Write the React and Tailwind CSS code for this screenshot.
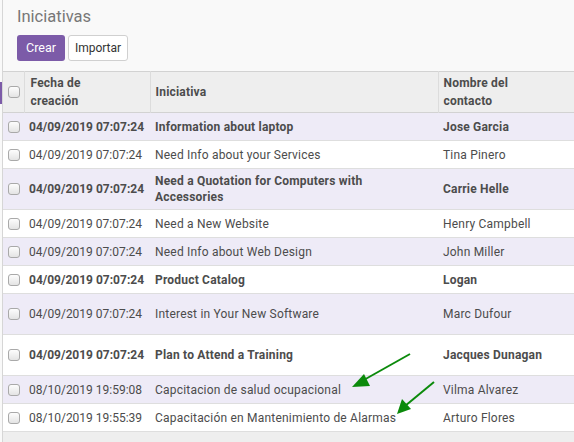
import React from "react";

const rows = [
  { date: "04/09/2019 07:07:24", name: "Information about laptop", contact: "Jose Garcia", bold: true, h: "h-[28px]" },
  { date: "04/09/2019 07:07:24", name: "Need Info about your Services", contact: "Tina Pinero", bold: false, h: "h-[28px]" },
  { date: "04/09/2019 07:07:24", name: "Need a Quotation for Computers with Accessories", contact: "Carrie Helle", bold: true, h: "h-[41px]" },
  { date: "04/09/2019 07:07:24", name: "Need a New Website", contact: "Henry Campbell", bold: false, h: "h-[28px]" },
  { date: "04/09/2019 07:07:24", name: "Need Info about Web Design", contact: "John Miller", bold: false, h: "h-[28px]" },
  { date: "04/09/2019 07:07:24", name: "Product Catalog", contact: "Logan", bold: true, h: "h-[28px]" },
  { date: "04/09/2019 07:07:24", name: "Interest in Your New Software", contact: "Marc Dufour", bold: false, h: "h-[41px]" },
  { date: "04/09/2019 07:07:24", name: "Plan to Attend a Training", contact: "Jacques Dunagan", bold: true, h: "h-[41px]" },
  { date: "08/10/2019 19:59:08", name: "Capcitacion de salud ocupacional", contact: "Vilma Alvarez", bold: false, h: "h-[28px]" },
  { date: "08/10/2019 19:55:39", name: "Capacitación en Mantenimiento de Alarmas", contact: "Arturo Flores", bold: false, h: "h-[28px]" },
];

function Check() {
  return (
    <span className="block w-[12px] h-[12px] rounded-[3px] border border-[#a9a9a9] bg-gradient-to-b from-[#fdfdfd] to-[#e4e4e4]" />
  );
}

export default function App() {
  return (
    <div className="relative w-[574px] h-[442px] overflow-hidden bg-[#f9f9f9] font-['Roboto',sans-serif] text-[12px] text-[#4c4c4c]">
      <div className="absolute left-0 top-[82px] w-[2px] h-[22px] bg-[#7c5ba8]" />
      <div className="ml-[2px] h-full border-l border-[#d6d6d6] flex flex-col">
        <div className="pl-[14px] pt-[6px] h-[71px]">
          <div className="text-[16.5px] text-[#777] leading-[21px]">Iniciativas</div>
          <div className="flex gap-[3px] mt-[8px]">
            <button className="w-[48px] h-[26px] rounded-[3px] bg-[#7c5ba8] text-white text-[12.5px]">Crear</button>
            <button className="w-[60px] h-[26px] rounded-[3px] bg-white border border-[#d0d0d0] text-[#333] text-[12px]">Importar</button>
          </div>
        </div>
        <table className="w-full border-collapse table-fixed">
          <colgroup>
            <col className="w-[21px]" />
            <col className="w-[126px]" />
            <col className="w-[288px]" />
            <col />
          </colgroup>
          <thead>
            <tr className="h-[41px] bg-[#eeeeee] border-t border-b border-[#d2d2d2] font-bold leading-[18px] tracking-[0.2px]">
              <th className="pl-[5px] align-middle"><Check /></th>
              <th className="text-left font-bold px-[6px] border-l border-[#dcdcdc]">Fecha de<br />creación</th>
              <th className="text-left font-bold px-[5px] border-l border-[#dcdcdc]">Iniciativa</th>
              <th className="text-left font-bold px-[5px] border-l border-[#dcdcdc]">Nombre del<br />contacto</th>
            </tr>
          </thead>
          <tbody>
            {rows.map((r, i) => (
              <tr
                key={i}
                className={`${r.h} border-b border-[#dedede] leading-[16px] ${i % 2 === 0 ? "bg-[#eeebf7]" : "bg-white"} ${r.bold ? "font-bold" : ""}`}
              >
                <td className="pl-[5px] align-middle"><Check /></td>
                <td className="px-[5px] whitespace-nowrap">{r.date}</td>
                <td className="px-[5px] tracking-[0.2px]">{r.name}</td>
                <td className="px-[5px] tracking-[0.2px]">{r.contact}</td>
              </tr>
            ))}
          </tbody>
        </table>
        <div className="flex-1 bg-[#eeeeee]" />
      </div>
      <svg className="absolute left-0 top-0 pointer-events-none" width="574" height="442">
        <g stroke="#0b8a0b" strokeWidth="2" fill="#0b8a0b">
          <line x1="410" y1="354" x2="362" y2="381" />
          <polygon points="352,387 364,374 370,386" stroke="none" />
          <line x1="434" y1="382" x2="405" y2="406" />
          <polygon points="397,414 402,399 411,409" stroke="none" />
        </g>
      </svg>
    </div>
  );
}
